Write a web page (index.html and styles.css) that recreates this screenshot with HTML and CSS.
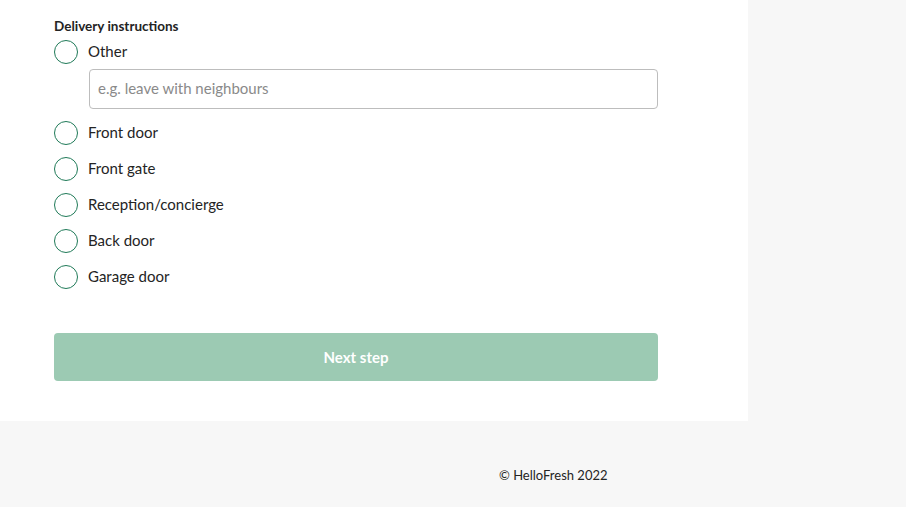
FILE: index.html
```html
<!DOCTYPE html>
<html lang="en">
<head>
    <meta charset="UTF-8">
    <meta name="viewport" content="width=device-width, initial-scale=1.0">
    <title>Delivery instructions</title>
    <link rel="stylesheet" href="styles.css">
</head>
<body>
    <div class="panel">
        <form class="form">
            <div class="group-label">Delivery instructions</div>
            <label class="radio">
                <input type="radio" name="instructions" value="other">
                <span class="circle"></span>
                <span>Other</span>
            </label>
            <input type="text" class="other-input" placeholder="e.g. leave with neighbours">
            <div class="options">
                <label class="radio">
                    <input type="radio" name="instructions" value="front-door">
                    <span class="circle"></span>
                    <span>Front door</span>
                </label>
                <label class="radio">
                    <input type="radio" name="instructions" value="front-gate">
                    <span class="circle"></span>
                    <span>Front gate</span>
                </label>
                <label class="radio">
                    <input type="radio" name="instructions" value="reception">
                    <span class="circle"></span>
                    <span>Reception/concierge</span>
                </label>
                <label class="radio">
                    <input type="radio" name="instructions" value="back-door">
                    <span class="circle"></span>
                    <span>Back door</span>
                </label>
                <label class="radio">
                    <input type="radio" name="instructions" value="garage-door">
                    <span class="circle"></span>
                    <span>Garage door</span>
                </label>
            </div>
            <button type="button" class="next" disabled>Next step</button>
        </form>
    </div>
    <footer class="footer">© HelloFresh 2022</footer>
</body>
</html>
```

FILE: styles.css
```css
body {
    margin: 0;
    padding: 0;
    background-color: #f7f7f7;
    font-family: Lato, "Open Sans", sans-serif;
    color: #242424;
}
.panel {
    width: 748px;
    background-color: #fff;
    padding: 16px 0 40px 54px;
    box-sizing: border-box;
}
.form {
    width: 604px;
    display: flex;
    flex-direction: column;
}
.group-label {
    font-size: 13.5px;
    font-weight: 700;
    line-height: 20px;
    margin-bottom: 4px;
}
.radio {
    display: flex;
    align-items: center;
    gap: 10px;
    height: 24px;
    font-size: 15px;
    line-height: 24px;
    cursor: pointer;
}
.radio span:last-child {
    margin-top: -2px;
}
.radio input {
    display: none;
}
.circle {
    width: 24px;
    height: 24px;
    border: 1.5px solid #1f7a58;
    border-radius: 50%;
    box-sizing: border-box;
    flex-shrink: 0;
}
.other-input {
    margin: 5px 0 0 35px;
    width: 569px;
    height: 40px;
    box-sizing: border-box;
    border: 1px solid #bdbdbd;
    border-radius: 4px;
    padding: 0 8px 2px;
    font-family: inherit;
    font-size: 15px;
    color: #242424;
}
.other-input::placeholder {
    color: #8a8a8a;
}
.options {
    display: flex;
    flex-direction: column;
    gap: 12px;
    margin-top: 12px;
}
.next {
    margin-top: 44px;
    height: 48px;
    border: none;
    border-radius: 4px;
    background-color: #9ccab3;
    color: #fff;
    font-family: inherit;
    font-size: 15px;
    font-weight: 700;
    padding: 0;
}
.footer {
    padding: 45px 0 0 499px;
    font-size: 13px;
    line-height: 18px;
    color: #242424;
}
```
